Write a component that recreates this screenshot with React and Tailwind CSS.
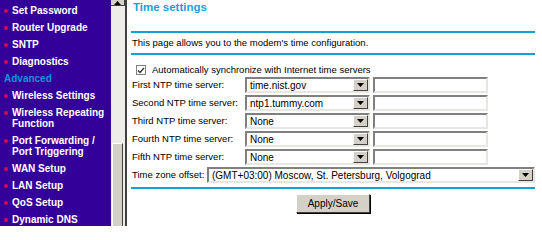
import { ChevronDown } from "lucide-react"

const menu = [
  { label: "Set Password" },
  { label: "Router Upgrade" },
  { label: "SNTP" },
  { label: "Diagnostics" },
  { label: "Advanced", heading: true },
  { label: "Wireless Settings" },
  { label: "Wireless Repeating", more: "Function" },
  { label: "Port Forwarding /", more: "Port Triggering" },
  { label: "WAN Setup" },
  { label: "LAN Setup" },
  { label: "QoS Setup" },
  { label: "Dynamic DNS" },
]

const servers = [
  { label: "First NTP time server:", value: "time.nist.gov" },
  { label: "Second NTP time server:", value: "ntp1.tummy.com" },
  { label: "Third NTP time server:", value: "None" },
  { label: "Fourth NTP time server:", value: "None" },
  { label: "Fifth NTP time server:", value: "None" },
]

const DropButton = () => (
  <div className="flex w-[15px] shrink-0 items-center justify-center border border-t-white border-l-white border-r-[#404040] border-b-[#404040] bg-[#d4d0c8]">
    <svg width="7" height="4" viewBox="0 0 7 4"><path d="M0 0h7L3.5 4z" fill="#000" /></svg>
  </div>
)

const Select = ({ value, className }) => (
  <div className={`flex h-[16px] border-2 border-t-[#808080] border-l-[#808080] border-r-[#e8e6e0] border-b-[#e8e6e0] bg-white ${className}`}>
    <span className="flex-1 pl-[3px] text-[10px] leading-[13px] text-black">{value}</span>
    <DropButton />
  </div>
)

const Sidebar = () => (
  <nav className="w-[111px] shrink-0 bg-[#330099] pt-[5px] pl-[4px]">
    <ul className="flex flex-col gap-[6px]">
      {menu.map((item, i) =>
        item.heading ? (
          <li key={i} className="text-[10px] font-bold leading-[11px] text-[#0a98dc]">{item.label}</li>
        ) : (
          <li key={i} className="flex gap-[4px] text-[10px] font-bold leading-[11px] text-white">
            <span className="mt-[4px] h-[4px] w-[4px] shrink-0 rounded-full bg-[#e0004c]" />
            <span>
              {item.label}
              {item.more && <><br />{item.more}</>}
            </span>
          </li>
        )
      )}
    </ul>
  </nav>
)

const Scrollbar = () => (
  <div className="flex w-[16px] shrink-0">
    <div className="flex w-[14px] flex-col bg-[#eeede9]">
      <div className="flex h-[6px] items-end justify-center border-r border-b border-[#404040] bg-[#d4d0c8]">
        <svg width="7" height="4" viewBox="0 0 7 4"><path d="M3.5 0L7 4H0z" fill="#000" /></svg>
      </div>
      <div className="flex-1" />
      <div className="ml-[1px] h-[83px] w-[11px] border-l border-t border-l-white border-t-white border-r border-r-[#404040] bg-[#d4d0c8]" />
    </div>
    <div className="w-[2px] bg-[#404040]" />
  </div>
)

export default function App() {
  return (
    <div className="flex h-[226px] w-[542px] overflow-hidden bg-white font-['Liberation_Sans',Arial,sans-serif]">
      <Sidebar />
      <Scrollbar />
      <main className="flex-1 pl-[4px] pr-[7px] text-[9.5px] text-black">
        <h1 className="pl-[2px] pt-[1px] text-[11.5px] font-bold leading-[13px] text-[#1a9fd8]">Time settings</h1>
        <div className="mt-[17px] h-[2px] bg-[#12a0d6]" />
        <p className="mt-[3px] pl-[1px] leading-[14px]">This page allows you to the modem's time configuration.</p>
        <div className="mt-[3px] h-[2px] bg-[#12a0d6]" />
        <label className="mt-[9px] flex items-center gap-[6px] pl-[5px] leading-[12px]">
          <span className="flex h-[10px] w-[10px] items-center justify-center border border-[#808080] bg-white">
            <svg width="8" height="7" viewBox="0 0 8 7"><path d="M1 3.5L3 5.5L7 1" fill="none" stroke="#333" strokeWidth="1.3" /></svg>
          </span>
          Automatically synchronize with Internet time servers
        </label>
        <div className="mt-[1px] flex flex-col gap-[2px]">
          {servers.map((s) => (
            <div key={s.label} className="flex items-center">
              <span className="w-[114px] pl-[1px]">{s.label}</span>
              <Select value={s.value} className="w-[125px]" />
              <div className="ml-[3px] h-[16px] w-[115px] border-2 border-t-[#808080] border-l-[#808080] border-r-[#e8e6e0] border-b-[#e8e6e0] bg-white" />
            </div>
          ))}
          <div className="flex items-center">
            <span className="w-[76px] pl-[1px]">Time zone offset:</span>
            <Select value="(GMT+03:00) Moscow, St. Petersburg, Volgograd" className="flex-1" />
          </div>
        </div>
        <div className="mt-[4px] h-[2px] bg-[#12a0d6]" />
        <div className="mt-[5px] flex justify-center">
          <button className="h-[19px] w-[74px] border border-t-white border-l-white border-r-[#404040] border-b-[#404040] bg-[#d4d0c8] text-[10px] text-black shadow-[1px_1px_0_#000]">
            Apply/Save
          </button>
        </div>
      </main>
    </div>
  )
}
